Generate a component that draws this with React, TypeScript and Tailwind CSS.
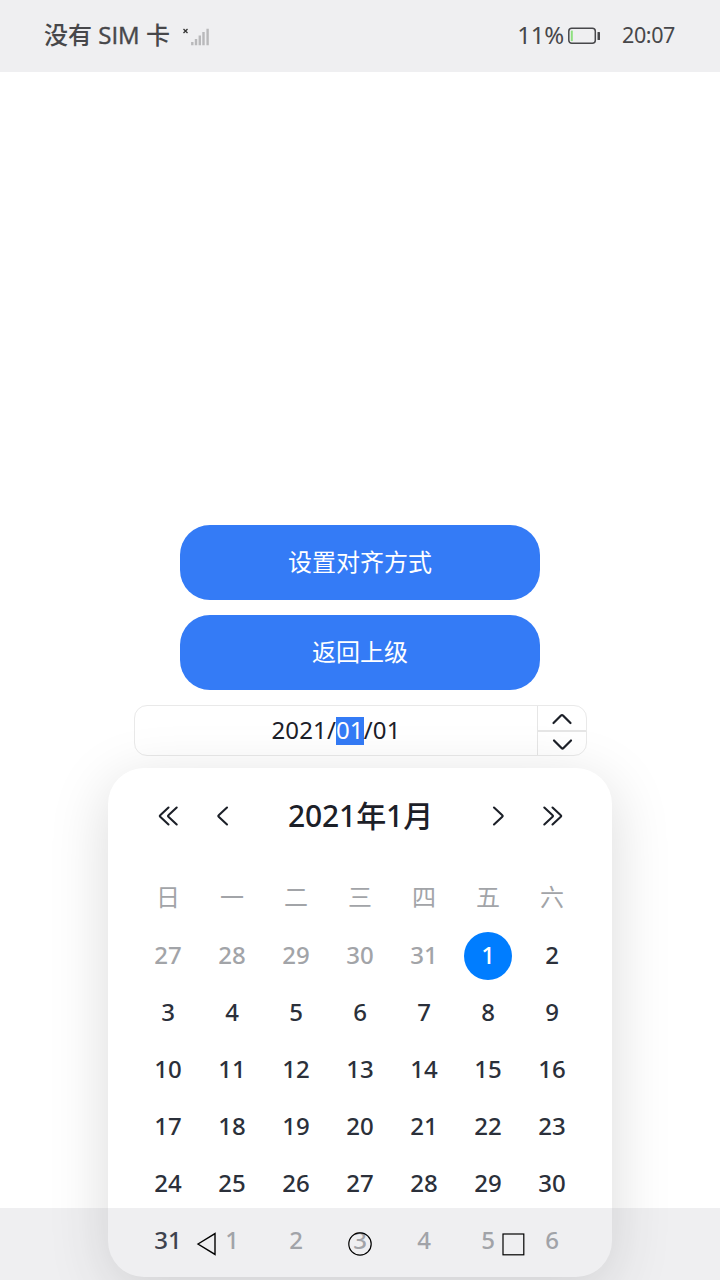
import React from "react";

const weekdays = ["日", "一", "二", "三", "四", "五", "六"];

const previousDays = [27, 28, 29, 30, 31];
const monthDays = Array.from({ length: 31 }, (_, i) => i + 1);
const nextDays = [1, 2, 3, 4, 5, 6];

function StatusBar() {
  return (
    <header className="flex h-[72px] shrink-0 items-center justify-between bg-[#efeff1] pr-[45px] pb-[2px] pl-[44px] text-[#47474a]">
      <div className="flex items-center">
        <span className="font-['Open_Sans','Noto_Sans_CJK_SC',sans-serif] text-[24px] leading-[34px] font-medium whitespace-pre">
          没有 <span className="[-webkit-text-stroke:0.4px_#47474a]">SIM</span> 卡
        </span>
        <svg className="ml-[12px] h-[22px] w-[30px]" viewBox="0 0 30 22" fill="none">
          <path d="M1.500 5l4 4M5.500 5l-4 4" stroke="#333" strokeWidth="1.300" />
          <path d="M10.300 18v3.200M14 15v6.200M17.800 11.500v9.700M21.500 8v13.200M25.600 4.800v16.400" stroke="#b9b9bb" strokeWidth="2.400" />
        </svg>
      </div>
      <div className="flex items-center">
        <span className="text-[24px] leading-[34px] tracking-[-0.200px]">11%</span>
        <svg className="mr-[21px] ml-[3px] h-[20px] w-[34px]" viewBox="0 0 34 20" fill="none">
          <rect x="1.800" y="3.300" width="26.500" height="15" rx="3" stroke="#47474a" strokeWidth="1.500" />
          <rect x="3.800" y="5.600" width="2" height="10.500" fill="#8ee07f" />
          <rect x="30.500" y="7.100" width="2.500" height="8" rx="0.500" fill="#47474a" />
        </svg>
        <span className="text-[21.500px] leading-[34px] tracking-[-0.400px]">20:07</span>
      </div>
    </header>
  );
}

function PillButton({ label }: { label: string }) {
  return (
    <button className="flex h-[75px] w-[360px] items-center justify-center rounded-[30px] bg-[#347bf6] pb-[1px] text-[24px] text-white">
      {label}
    </button>
  );
}

function DateField() {
  return (
    <div className="ml-[1px] flex h-[51px] w-[453px] overflow-hidden rounded-[13px] border border-[#e9e9e9] bg-white text-[#1c2028]">
      <div className="flex flex-1 items-center justify-center text-[24px] leading-[26px] tracking-[0.150px]">
        <span className="h-[28px]">2021/</span>
        <span className="h-[28px] bg-[#347bf6] text-white">01</span>
        <span className="h-[28px]">/01</span>
      </div>
      <div className="flex w-[49px] flex-col border-l border-[#e6e6e6]">
        <button className="flex flex-1 items-center justify-center border-b-2 border-[#e6e6e6] pt-[2px]">
          <svg className="h-[14px] w-[24px]" viewBox="0 0 24 14" fill="none" stroke="#1c2028" strokeWidth="2.200" strokeLinecap="round" strokeLinejoin="round">
            <path d="M3.500 11l7.500-7.500q1-1 2 0l7.500 7.500" />
          </svg>
        </button>
        <button className="flex flex-1 items-center justify-center pt-px">
          <svg className="h-[14px] w-[24px]" viewBox="0 0 24 14" fill="none" stroke="#1c2028" strokeWidth="2.200" strokeLinecap="round" strokeLinejoin="round">
            <path d="M4 3.500l7.500 7.500q1 1 2 0l7.500-7.500" />
          </svg>
        </button>
      </div>
    </div>
  );
}

function Arrow({ double = false, right = false }: { double?: boolean; right?: boolean }) {
  return (
    <button className="flex h-[24px] w-[24px] items-center justify-center">
      <svg className={right ? "h-[24px] w-[24px] rotate-180" : "h-[24px] w-[24px]"} viewBox="0 0 24 24" fill="none" stroke="#1c2028" strokeWidth="2.100" strokeLinecap="round" strokeLinejoin="round">
        {double ? (
          <path d="M12.500 3.500L4.200 11.300q-.8.700 0 1.400l8.300 7.800M20.700 3.500l-8.300 7.800q-.8.700 0 1.400l8.300 7.800" />
        ) : (
          <path d="M16 3.500L7.700 11.300q-.8.700 0 1.400l8.300 7.800" />
        )}
      </svg>
    </button>
  );
}

function Day({ value, muted = false, selected = false }: { value: number; muted?: boolean; selected?: boolean }) {
  const tone = selected ? "bg-[#007dff] text-white" : muted ? "text-[#a2a4a8]" : "text-[#2b303a]";
  return (
    <div className="flex h-[57px] items-center justify-center">
      <span className={`flex h-[48px] w-[48px] items-center justify-center rounded-full pb-[2px] text-[24px] leading-[46px] font-medium ${tone}`}>
        {value}
      </span>
    </div>
  );
}

function Calendar() {
  return (
    <section className="absolute top-[768px] left-[108px] h-[509px] w-[504px] rounded-[36px] bg-white shadow-[0_14px_60px_rgba(0,0,0,0.15)]">
      <div className="flex h-[96px] items-center justify-between pr-[47px] pl-[48px]">
        <div className="flex w-[79px] justify-between">
          <Arrow double />
          <Arrow />
        </div>
        <h1 className="text-[30px] leading-[40px] font-medium tracking-[-0.100px] text-[#1c2028]">2021年1月</h1>
        <div className="flex w-[79px] justify-between">
          <Arrow right />
          <Arrow double right />
        </div>
      </div>
      <div className="grid h-[63px] grid-cols-7 items-center px-[28px] pt-[2px]">
        {weekdays.map((day) => (
          <span key={day} className="text-center text-[24px] leading-[30px] text-[#a2a4a8]">
            {day}
          </span>
        ))}
      </div>
      <div className="grid grid-cols-7 px-[28px]">
        {previousDays.map((day) => (
          <Day key={`prev-${day}`} value={day} muted />
        ))}
        {monthDays.map((day) => (
          <Day key={day} value={day} selected={day === 1} />
        ))}
        {nextDays.map((day) => (
          <Day key={`next-${day}`} value={day} muted />
        ))}
      </div>
    </section>
  );
}

function NavigationBar() {
  return (
    <nav className="absolute bottom-0 left-0 flex h-[72px] w-full items-center justify-center gap-[129px] bg-[#a1a1ad]/17 text-black">
      <svg className="h-[24px] w-[24px]" viewBox="0 0 24 24" fill="none" stroke="currentColor" strokeWidth="1.400">
        <path d="M3 12L20 1.600v20.800z" />
      </svg>
      <svg className="h-[24px] w-[24px]" viewBox="0 0 24 24" fill="none" stroke="currentColor" strokeWidth="1.200">
        <circle cx="12" cy="12" r="11.200" />
      </svg>
      <svg className="h-[24px] w-[24px]" viewBox="0 0 24 24" fill="none" stroke="currentColor" strokeWidth="1.200">
        <rect x="2" y="2" width="20.800" height="20.800" />
      </svg>
    </nav>
  );
}

export default function App() {
  return (
    <div className="relative flex h-[1280px] w-[720px] flex-col overflow-hidden bg-white font-['Noto_Sans','Noto_Sans_CJK_SC',sans-serif]">
      <StatusBar />
      <main className="flex flex-1 flex-col items-center gap-[15px] pt-[453px]">
        <PillButton label="设置对齐方式" />
        <PillButton label="返回上级" />
        <DateField />
      </main>
      <Calendar />
      <NavigationBar />
    </div>
  );
}
